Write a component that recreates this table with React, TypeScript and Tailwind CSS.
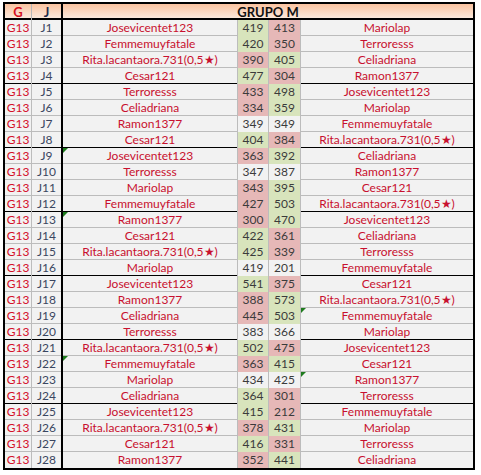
type Row = {
  j: string;
  a: string;
  s1: number;
  s2: number;
  b: string;
  c1?: "g" | "r";
  c2?: "g" | "r";
  ta?: boolean;
  tb?: boolean;
};

const RITA = "Rita.lacantaora.731(0,5★)";

const rows: Row[] = [
  { j: "J1", a: "Josevicentet123", s1: 419, s2: 413, b: "Mariolap", c1: "g", c2: "r" },
  { j: "J2", a: "Femmemuyfatale", s1: 420, s2: 350, b: "Terroresss", c1: "g", c2: "r" },
  { j: "J3", a: RITA, s1: 390, s2: 405, b: "Celiadriana", c1: "r", c2: "g" },
  { j: "J4", a: "Cesar121", s1: 477, s2: 304, b: "Ramon1377", c1: "g", c2: "r" },
  { j: "J5", a: "Terroresss", s1: 433, s2: 498, b: "Josevicentet123", c1: "r", c2: "g" },
  { j: "J6", a: "Celiadriana", s1: 334, s2: 359, b: "Mariolap", c1: "r", c2: "g" },
  { j: "J7", a: "Ramon1377", s1: 349, s2: 349, b: "Femmemuyfatale" },
  { j: "J8", a: "Cesar121", s1: 404, s2: 384, b: RITA, c1: "g", c2: "r" },
  { j: "J9", a: "Josevicentet123", s1: 363, s2: 392, b: "Celiadriana", c1: "r", c2: "g", ta: true },
  { j: "J10", a: "Terroresss", s1: 347, s2: 387, b: "Ramon1377" },
  { j: "J11", a: "Mariolap", s1: 343, s2: 395, b: "Cesar121", c1: "r", c2: "g" },
  { j: "J12", a: "Femmemuyfatale", s1: 427, s2: 503, b: RITA, c1: "r", c2: "g" },
  { j: "J13", a: "Ramon1377", s1: 300, s2: 470, b: "Josevicentet123", c1: "r", c2: "g", ta: true },
  { j: "J14", a: "Cesar121", s1: 422, s2: 361, b: "Celiadriana", c1: "g", c2: "r" },
  { j: "J15", a: RITA, s1: 425, s2: 339, b: "Terroresss", c1: "g", c2: "r" },
  { j: "J16", a: "Mariolap", s1: 419, s2: 201, b: "Femmemuyfatale" },
  { j: "J17", a: "Josevicentet123", s1: 541, s2: 375, b: "Cesar121", c1: "g", c2: "r" },
  { j: "J18", a: "Ramon1377", s1: 388, s2: 573, b: RITA, c1: "r", c2: "g" },
  { j: "J19", a: "Celiadriana", s1: 445, s2: 503, b: "Femmemuyfatale", c1: "r", c2: "g", tb: true },
  { j: "J20", a: "Terroresss", s1: 383, s2: 366, b: "Mariolap" },
  { j: "J21", a: RITA, s1: 502, s2: 475, b: "Josevicentet123", c1: "g", c2: "r" },
  { j: "J22", a: "Femmemuyfatale", s1: 363, s2: 415, b: "Cesar121", c1: "r", c2: "g", ta: true },
  { j: "J23", a: "Mariolap", s1: 434, s2: 425, b: "Ramon1377", tb: true },
  { j: "J24", a: "Celiadriana", s1: 364, s2: 301, b: "Terroresss", c1: "g", c2: "r" },
  { j: "J25", a: "Josevicentet123", s1: 415, s2: 212, b: "Femmemuyfatale", c1: "g", c2: "r" },
  { j: "J26", a: RITA, s1: 378, s2: 431, b: "Mariolap", c1: "r", c2: "g" },
  { j: "J27", a: "Cesar121", s1: 416, s2: 331, b: "Terroresss", c1: "g", c2: "r" },
  { j: "J28", a: "Ramon1377", s1: 352, s2: 441, b: "Celiadriana", c1: "r", c2: "g" },
];

const cols = "grid grid-cols-[27px_31px_175px_31px_32px_172px]";

function scoreBg(c?: "g" | "r") {
  if (c === "g") return "bg-[#d8e4bc]";
  if (c === "r") return "bg-[#e6b8b7]";
  return "bg-[#f2f2f2]";
}

// little green comment marker in the corner of a cell
function Marker() {
  return (
    <span className="absolute left-0 top-0 h-0 w-0 border-r-[5px] border-t-[5px] border-r-transparent border-t-[#1e7b1e]" />
  );
}

export default function App() {
  return (
    <div className="min-h-screen bg-white pl-[3px] pt-[2px]" style={{ fontFamily: "Lato, 'Open Sans', sans-serif" }}>
      <div className="inline-block border-2 border-black text-[12px] leading-[16px]">
        {/* Header */}
        <div className={`${cols} h-[16px] border-b-2 border-black bg-gradient-to-b from-[#fac3a0] to-[#fbe9dc]`}>
          <div className="border-r border-[#b7b7b7] text-center text-[13px] font-bold text-[#d40f1e]">G</div>
          <div className="border-r-2 border-black text-center text-[13px] font-bold text-[#1f2d4d]">J</div>
          <div className="col-span-4 text-center text-[13px] font-bold text-[#111]">GRUPO M</div>
        </div>

        {rows.map((r, i) => {
          const last = i === rows.length - 1;
          const sep = (i + 1) % 4 === 0;
          const rowBorder = last ? "" : sep ? "border-b border-black" : "border-b border-[#bcbcbc]";
          return (
            <div key={r.j} className={`${cols} h-[16px] bg-[#f2f2f2] ${rowBorder}`}>
              <div className="border-r border-[#bcbcbc] text-center text-[#d4102a]">G13</div>
              <div className="border-r-2 border-black text-center text-[#3a4660]">{r.j}</div>
              <div className="relative border-r border-[#bcbcbc] text-center text-[#c8102e]">
                {r.ta && <Marker />}
                {r.a}
              </div>
              <div className={`border-r border-[#bcbcbc] text-center text-[#3b3b3b] ${scoreBg(r.c1)}`}>{r.s1}</div>
              <div className={`border-r border-[#bcbcbc] text-center text-[#3b3b3b] ${scoreBg(r.c2)}`}>{r.s2}</div>
              <div className="relative text-center text-[#c8102e]">
                {r.tb && <Marker />}
                {r.b}
              </div>
            </div>
          );
        })}
      </div>
    </div>
  );
}
